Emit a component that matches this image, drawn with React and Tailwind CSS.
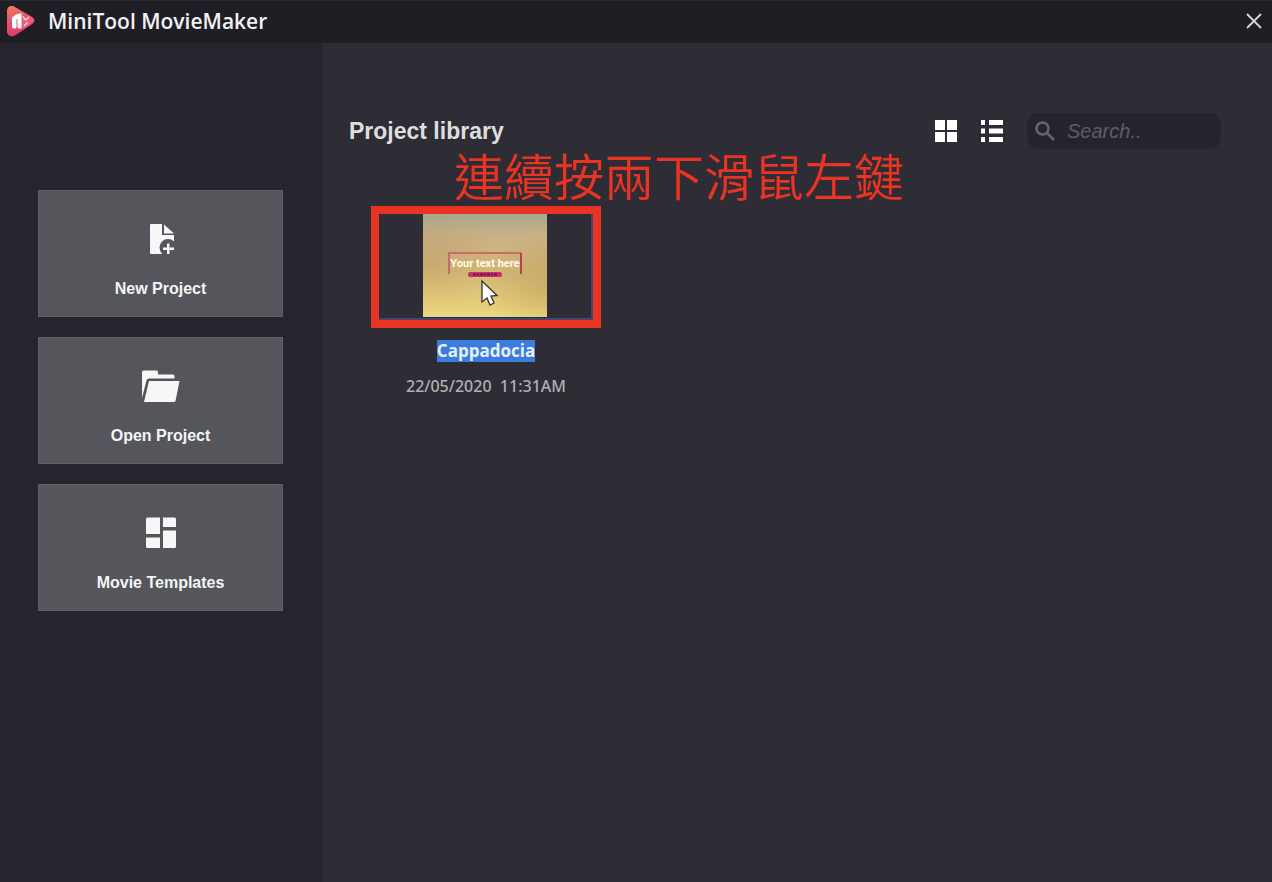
import React from 'react';

function Logo() {
  return (
    <svg className="h-8 w-8 shrink-0" viewBox="0 0 32 32" aria-hidden="true">
      <defs>
        <linearGradient id="logo" x1="0" y1="0" x2="0.3" y2="1">
          <stop offset="0" stopColor="#f08055" />
          <stop offset="0.45" stopColor="#e8566b" />
          <stop offset="1" stopColor="#e23a66" />
        </linearGradient>
      </defs>
      <path d="M3 6C3 2 6.500 0 10 1.500L27.500 11.500C31.500 14 31.500 17 27.500 19.500L11 30.500C7 32.500 3.500 30.500 3 27Z" fill="url(#logo)" />
      <path d="M15 9L20 13L25 11L30 15L24 21L16 25Z" fill="#f08a98" opacity=".35" />
      <path d="M8 12.500L12 9.500L17.500 8V22C17.500 24 13.500 24 13.500 22V14L12.500 14.500V22C12.500 24 8 24 8 22Z" fill="#fff" />
      <path d="M19 11L21.500 15L25 12M20 21L23.500 17.500" fill="none" stroke="#ffd9df" strokeWidth="1.200" />
    </svg>
  );
}

function NewIcon() {
  return (
    <svg className="h-9 w-10" viewBox="0 0 40 36" fill="#f7f7f8" aria-hidden="true">
      <path d="M9 4Q9 3 10 3H21V14H33V20.500A7.500 7.500 0 0 0 21 32.500V33H10Q9 33 9 32Z" />
      <path d="M23 3.500L33 12.500H23Z" />
      <path d="M26 22.500H28.500V26.500H33V29H28.500V33H26V29H22V26.500H26Z" />
    </svg>
  );
}

function OpenIcon() {
  return (
    <svg className="h-9 w-10" viewBox="0 0 40 36" fill="#f7f7f8" aria-hidden="true">
      <path d="M1 4Q1 2.500 2.500 2.500H15.500Q17 2.500 17 4.500V6.500H32Q33.500 6.500 33.500 8.500V10.500H8Q6 10.500 5.500 12.500L1 30Z" />
      <path d="M8 13H38.500L34.500 33Q34.300 34 33 34H3Z" />
    </svg>
  );
}

function TemplatesIcon() {
  return (
    <svg className="h-9 w-10" viewBox="0 0 40 36" fill="#f7f7f8" aria-hidden="true">
      <path d="M6.500 2.500H19V19H5V4Q5 2.500 6.500 2.500ZM22 2.500H33.500Q35 2.500 35 4V12H22ZM5 22.500H19V33H6.500Q5 33 5 31.500ZM22 15.500H35V31.500Q35 33 33.500 33H22Z" />
    </svg>
  );
}

const actions = [
  { label: 'New Project', Icon: NewIcon },
  { label: 'Open Project', Icon: OpenIcon },
  { label: 'Movie Templates', Icon: TemplatesIcon },
];

function ProjectThumbnail() {
  return (
    <svg className="h-[103px] w-[124px]" viewBox="0 0 124 103" role="img" aria-label="Your text here">
      <defs>
        <linearGradient id="sky" x1="0" y1="0" x2="0" y2="1">
          <stop offset="0" stopColor="#a6aa90" />
          <stop offset="0.22" stopColor="#cbb084" />
          <stop offset="0.55" stopColor="#d4b776" />
          <stop offset="0.85" stopColor="#e3ca78" />
          <stop offset="1" stopColor="#ecd982" />
        </linearGradient>
        <radialGradient id="shade" cx="0.05" cy="0.4" r="0.5">
          <stop offset="0" stopColor="#a98654" stopOpacity=".25" />
          <stop offset="1" stopColor="#a98654" stopOpacity="0" />
        </radialGradient>
        <radialGradient id="shadeRight" cx="1" cy="0.7" r="0.5">
          <stop offset="0" stopColor="#a98345" stopOpacity=".3" />
          <stop offset="1" stopColor="#a98345" stopOpacity="0" />
        </radialGradient>
      </defs>
      <rect width="124" height="103" fill="url(#sky)" />
      <rect width="124" height="103" fill="url(#shade)" />
      <rect width="124" height="103" fill="url(#shadeRight)" />
      <path d="M26 60V39H98V60" fill="none" stroke="#c45768" strokeWidth="1.500" />
      <path d="M98 39V60" stroke="#bd3e5c" strokeWidth="2" />
      <text x="62" y="53" textAnchor="middle" fontFamily="Roboto, sans-serif" fontWeight="700" fontSize="11" fill="#fffbe9">Your text here</text>
      <rect x="45" y="58" width="34" height="5" rx="2" fill="#ce2c6d" />
      <path d="M50 60.500H74" stroke="#54213e" strokeWidth="2" strokeDasharray="3 1 2 1" />
      <path d="M59 67V88L64 84L67 91L71 89L68 82L74 81.500Z" fill="#fff" stroke="#35312d" strokeWidth="1.300" />
    </svg>
  );
}

function ProjectCard() {
  return (
    <article className="relative flex w-[230px] flex-col items-center">
      <p className="absolute bottom-full left-[83px] mb-1 whitespace-nowrap font-['Noto_Sans_CJK_TC',sans-serif] text-[50px] leading-[56px] font-[350] text-[#e93323]">
        連續按兩下滑鼠左鍵
      </p>
      <button type="button" aria-label="Open Cappadocia" className="flex h-[122px] w-full justify-center border-8 border-[#e93323]">
        <span className="flex h-full w-full justify-center border-r-2 border-b-2 border-[#414674]">
          <ProjectThumbnail />
        </span>
      </button>
      <h2 className="mt-3 bg-[#3b7ddd] font-['Open_Sans',sans-serif] text-[17px] leading-[22px] font-bold text-[#e8effb]">Cappadocia</h2>
      <time className="mt-3 whitespace-pre font-['Noto_Sans',sans-serif] text-base leading-6 font-medium text-[#b0b0b3]" dateTime="2020-05-22T11:31">{'22/05/2020  11:31AM'}</time>
    </article>
  );
}

export default function App() {
  return (
    <div className="flex min-h-screen flex-col bg-[#2e2d35] font-['Liberation_Sans',sans-serif] text-white">
      <header className="flex h-[43px] items-center border-t border-[#2a2931] bg-[#1f1e24] pr-2 pb-0.5 pl-1">
        <Logo />
        <h1 className="ml-3 font-['Open_Sans',sans-serif] text-[21px] leading-7 font-semibold text-[#f2f2f4]">MiniTool MovieMaker</h1>
        <button type="button" aria-label="Close" className="ml-auto flex h-5 w-5 items-center justify-center">
          <svg className="h-4 w-4" viewBox="0 0 16 16" fill="none" stroke="#d6d6d9" strokeWidth="1.800" aria-hidden="true">
            <path d="M1 1L15 15M15 1L1 15" />
          </svg>
        </button>
      </header>
      <div className="flex flex-1">
        <nav className="flex w-[323px] shrink-0 flex-col gap-5 bg-[#26252e] pt-[147px] pr-10 pl-[38px]">
          {actions.map(({ label, Icon }) => (
            <button key={label} type="button" className="flex h-[127px] flex-col items-center border border-[#5f6065] bg-[#55565b] pt-[30px]">
              <Icon />
              <span className="mt-5 text-base leading-6 font-bold text-[#f4f4f6]">{label}</span>
            </button>
          ))}
        </nav>
        <main className="flex-1 pt-[70px] pr-[51px] pl-[26px]">
          <div className="flex h-9 items-center">
            <h2 className="mr-auto text-[23px] leading-7 font-bold text-[#dededf]">Project library</h2>
            <button type="button" aria-label="Grid view" className="mr-6">
              <svg className="h-[22px] w-[22px]" viewBox="0 0 22 22" fill="#fff" aria-hidden="true">
                <path d="M0 0H10V10H0ZM12 0H22V10H12ZM0 12H10V22H0ZM12 12H22V22H12Z" />
              </svg>
            </button>
            <button type="button" aria-label="List view" className="mr-6">
              <svg className="h-[22px] w-[22px]" viewBox="0 0 22 22" fill="#fff" aria-hidden="true">
                <path d="M0 0H4V5H0ZM8 0H22V5H8ZM0 8.500H4V13.500H0ZM8 8.500H22V13.500H8ZM0 17H4V22H0ZM8 17H22V22H8Z" />
              </svg>
            </button>
            <label className="flex h-9 w-[194px] items-center gap-2 rounded-xl bg-[#25242d] pl-2">
              <svg className="h-5 w-5 shrink-0" viewBox="0 0 20 20" fill="none" stroke="#65656d" strokeWidth="2.500" aria-hidden="true">
                <circle cx="7.500" cy="7.500" r="6" />
                <path d="M12 12L19 19" />
              </svg>
              <input type="text" aria-label="Search projects" placeholder="Search.." className="w-full min-w-0 bg-transparent pl-1 text-xl leading-7 italic outline-none placeholder:text-[#5d5d66]" />
            </label>
          </div>
          <section aria-label="Projects" className="pt-[57px] pl-[22px]">
            <ProjectCard />
          </section>
        </main>
      </div>
    </div>
  );
}
